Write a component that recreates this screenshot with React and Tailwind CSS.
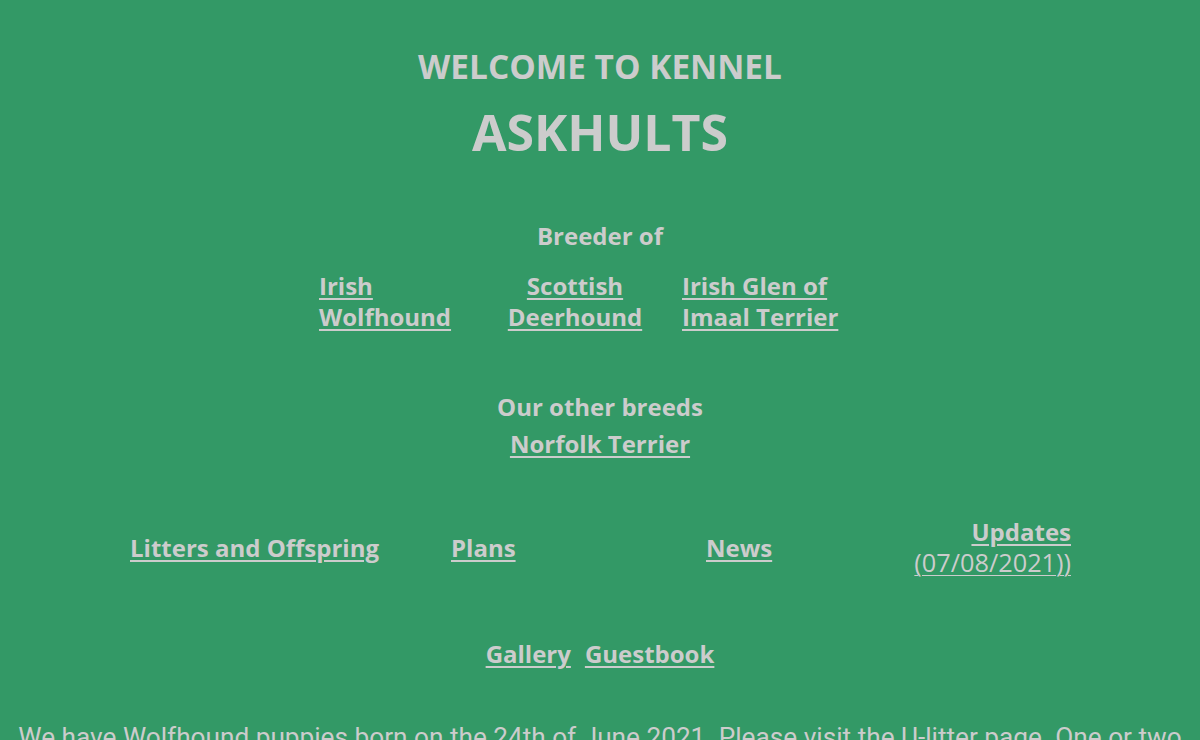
export default function App() {
  const link = "underline decoration-[2px] underline-offset-[3px]";
  return (
    <div className="w-[1200px] h-[740px] overflow-hidden bg-[#339966] text-[#cccccc] font-['Open_Sans',sans-serif]">
      <div className="pt-[46px] text-center font-bold text-[33.4px] leading-[40px]">WELCOME TO KENNEL</div>
      <div className="mt-[14px] text-center font-bold text-[50px] leading-[64px]">ASKHULTS</div>
      <div className="mt-[57px] text-center font-bold text-[24px] leading-[30px]">Breeder of</div>
      <div className="mt-[19px] flex font-bold text-[24px] leading-[31px] pl-[319px]">
        <div className="w-[170px]"><a className={link}>Irish</a><br /><a className={link}>Wolfhound</a></div>
        <div className="w-[172px] text-center"><a className={link}>Scottish</a><br /><a className={link}>Deerhound</a></div>
        <div className="pl-[21px]"><a className={link}>Irish Glen of</a><br /><a className={link}>Imaal Terrier</a></div>
      </div>
      <div className="mt-[60px] text-center font-bold text-[24px] leading-[30px]">Our other breeds</div>
      <div className="mt-[7px] text-center font-bold text-[24px] leading-[30px]"><a className={link}>Norfolk Terrier</a></div>
      <div className="mt-[57px] flex items-center font-bold text-[24px] leading-[31px] pl-[130px]">
        <div className="w-[321px]"><a className={link}>Litters and Offspring</a></div>
        <div className="w-[255px]"><a className={link}>Plans</a></div>
        <div className="w-[190px]"><a className={link}>News</a></div>
        <div className="w-[175px] text-right"><a className={link}>Updates</a><br /><a className="underline decoration-[1px] underline-offset-[3px] font-normal text-[25.3px]">(07/08/2021))</a></div>
      </div>
      <div className="mt-[61px] flex justify-center gap-[14px] font-bold text-[24px] leading-[30px]">
        <a className={link}>Gallery</a><a className={link}>Guestbook</a>
      </div>
      <div className="mt-[51px] px-[10px] text-center font-['Roboto',sans-serif] text-[26.2px] leading-[34px]">
        We have Wolfhound puppies born on the 24th of June 2021. Please visit the U-litter page. One or two puppies are still available.
      </div>
    </div>
  );
}
